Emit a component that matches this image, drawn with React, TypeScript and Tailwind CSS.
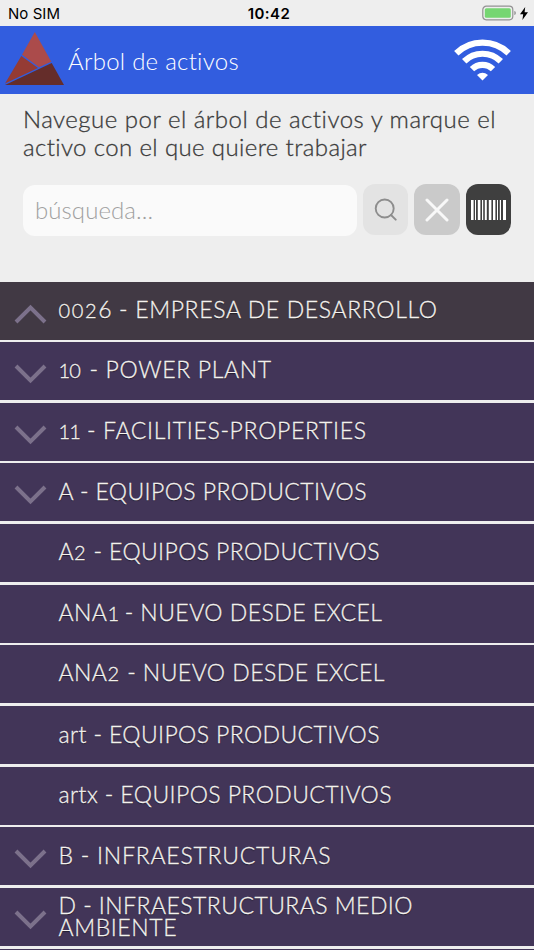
import { useLayoutEffect, useRef } from "react";

type FitProps = { text: string; width: number; className?: string };

// Renders one line of text, tracked so that it spans the given width.
// The digits 0, 1 and 2 are drawn low, as old-style numerals; the 1 is narrow.
function FitLine({ text, width, className = "" }: FitProps) {
  const ref = useRef<HTMLSpanElement>(null);
  useLayoutEffect(() => {
    const el = ref.current;
    if (!el) return;
    el.style.letterSpacing = "0px";
    const natural = el.getBoundingClientRect().width;
    el.style.letterSpacing = `${(width - natural) / (text.length - 1)}px`;
  }, [text, width]);
  return (
    <span className={`block whitespace-nowrap ${className}`}>
      <span ref={ref}>
        {text.split(/([012])/).map((part, i) =>
          /^[012]$/.test(part) ? (
            <span key={i} className={part === "1" ? "-mr-[1.5px] text-[0.87em]" : "mr-[1px] text-[0.87em]"}>
              {part}
            </span>
          ) : (
            part
          ),
        )}
      </span>
    </span>
  );
}

type Row = { lines: [string, number][]; arrow?: "up" | "down" };

const rows: Row[] = [
  { lines: [["0026 - EMPRESA DE DESARROLLO", 378.5]], arrow: "up" },
  { lines: [["10 - POWER PLANT", 212.5]], arrow: "down" },
  { lines: [["11 - FACILITIES-PROPERTIES", 307.5]], arrow: "down" },
  { lines: [["A - EQUIPOS PRODUCTIVOS", 308]], arrow: "down" },
  { lines: [["A2 - EQUIPOS PRODUCTIVOS", 321]] },
  { lines: [["ANA1 - NUEVO DESDE EXCEL", 323.5]] },
  { lines: [["ANA2 - NUEVO DESDE EXCEL", 326]] },
  { lines: [["art - EQUIPOS PRODUCTIVOS", 321]] },
  { lines: [["artx - EQUIPOS PRODUCTIVOS", 333]] },
  { lines: [["B - INFRAESTRUCTURAS", 272]], arrow: "down" },
  { lines: [["D - INFRAESTRUCTURAS MEDIO", 354], ["AMBIENTE", 118]], arrow: "down" },
];

function StatusBar() {
  return (
    <div className="grid h-[26px] shrink-0 grid-cols-3 items-center pl-2 pr-[6px] font-['Inter',sans-serif] text-[15px] text-black">
      <FitLine text="No SIM" width={52} className="pt-[2px]" />
      <span className="pt-[2px] pl-[2px] text-center font-semibold tracking-[0.4px]">10:42</span>
      <span className="flex items-center justify-end gap-[4px]">
        <svg width="34" height="16" viewBox="0 0 34 16" fill="none">
          <rect x="0.8" y="1.2" width="30" height="13.6" rx="3.5" stroke="#929292" strokeWidth="1.2" />
          <rect x="2.8" y="3.2" width="26" height="9.6" rx="1.5" fill="#76d672" />
          <path d="M32.3 6v4c1.2-.4 1.5-1 1.5-2s-.3-1.600-1.500-2z" fill="#929292" />
        </svg>
        <svg width="8" height="13" viewBox="0 0 8 13">
          <path d="M5.200 0L0 7.200h3.200L2.400 13 8 5.300H4.600z" fill="#000" />
        </svg>
      </span>
    </div>
  );
}

function Header() {
  return (
    <header className="flex h-[68px] shrink-0 items-center bg-[#325ddf] pl-[5px] pr-[23px]">
      <svg width="59" height="53" viewBox="0 0 59 53" className="-mt-[4px] shrink-0">
        <path d="M29.800 0L46.300 29.700 34 35.300 17 22.800z" fill="#ab4b4b" />
        <path d="M16.300 24L33 36 0 51.500z" fill="#953b34" />
        <path d="M46.700 31L59 53H0z" fill="#652d2a" />
      </svg>
      <FitLine text="Árbol de activos" width={171} className="ml-[4px] mt-[2px] grow text-2xl font-light text-white" />
      <svg width="57" height="42" viewBox="0 0 57 42" className="shrink-0" fill="none" stroke="#fff">
        <path d="M2.300 14.200a37.500 37.500 0 0 1 52.400 0" strokeWidth="6.200" />
        <path d="M10.200 22.300a26 26 0 0 1 36.600 0" strokeWidth="6.200" />
        <path d="M18 30.100a15 15 0 0 1 21 0" strokeWidth="6.200" />
        <path d="M28.500 41.500l-5.500-5.500q5.500-4.600 11 0z" fill="#fff" stroke="none" />
      </svg>
    </header>
  );
}

const bars: [number, number][] = [
  [0, 2.6], [4, 1], [6.800, 2.6], [11, 1.2], [13.800, 2], [17.800, 2.6],
  [22, 2.4], [26, 1], [28.800, 1.2], [32, 3],
];

function SearchBar() {
  return (
    <div className="flex items-start pl-[23px] pt-[22px]">
      <div className="mt-[2px] flex h-[51px] w-[334px] items-center rounded-xl bg-[#fafafa] pb-[2px] pl-3">
        <FitLine text="búsqueda..." width={118} className="text-2xl font-light text-[#a0a0a0]" />
      </div>
      <button className="ml-[6px] mt-px flex h-[51px] w-[45px] items-center justify-center rounded-xl bg-[#e3e3e3]">
        <svg width="23" height="23" viewBox="0 0 23 23" fill="none" stroke="#8d8d8d" strokeWidth="1.900" strokeLinecap="round">
          <circle cx="10.700" cy="10.500" r="9" />
          <path d="M17 17l4.700 4.700" />
        </svg>
      </button>
      <button className="ml-[6px] mt-px flex h-[51px] w-[46px] items-center justify-center rounded-xl bg-[#cacaca]">
        <svg width="24" height="24" viewBox="0 0 24 24" stroke="#f8f8f8" strokeWidth="3" strokeLinecap="round">
          <path d="M2 2l20 20M22 2L2 22" />
        </svg>
      </button>
      <button className="ml-[6px] mt-px flex h-[51px] w-[45px] items-center justify-center rounded-xl bg-[#3f3f3f]">
        <svg width="35" height="20" viewBox="0 0 35 20" fill="#fff">
          {bars.map(([x, w]) => (
            <rect key={x} x={x} width={w} height="20" />
          ))}
        </svg>
      </button>
    </div>
  );
}

function AssetRow({ row }: { row: Row }) {
  const color = row.arrow === "up" ? "bg-[#413944]" : "bg-[#423558]";
  return (
    <li className={`flex h-[58px] shrink-0 items-center ${color}`}>
      <span className="flex w-[58.5px] shrink-0 pl-[14px] pt-[6px]">
        {row.arrow && (
          <svg
            width="33"
            height="20"
            viewBox="0 0 33 20"
            fill="none"
            stroke="#7c718b"
            strokeWidth="4"
            className={row.arrow === "up" ? "rotate-180" : ""}
          >
            <path d="M2 2l14.500 14.500L31 2" />
          </svg>
        )}
      </span>
      <span className="-mt-[3px] text-[23px] font-light leading-[22px] text-[#f4f2ee] [-webkit-text-stroke:0.3px_#f4f2ee] [text-shadow:0_1px_1px_rgba(0,0,0,0.5)]">
        {row.lines.map(([text, width]) => (
          <FitLine key={text} text={text} width={width} />
        ))}
      </span>
    </li>
  );
}

export default function App() {
  return (
    <div className="flex h-[950px] w-[534px] flex-col overflow-hidden bg-[#eeeeee] font-['Lato',sans-serif]">
      <StatusBar />
      <Header />
      <main className="flex grow flex-col">
        <div className="h-[187.500px] shrink-0">
          <div className="pl-[23px] pt-[11px] text-2xl font-light leading-[28px] text-[#3b3b3b] [-webkit-text-stroke:0.3px_#3b3b3b]">
            <FitLine text="Navegue por el árbol de activos y marque el" width={473} />
            <FitLine text="activo con el que quiere trabajar" width={344} />
          </div>
          <SearchBar />
        </div>
        <ul className="flex flex-col gap-[2.670px]">
          {rows.map((row) => (
            <AssetRow key={row.lines[0][0]} row={row} />
          ))}
          <li className="h-[58px] shrink-0 bg-[#423558]" />
        </ul>
      </main>
    </div>
  );
}
